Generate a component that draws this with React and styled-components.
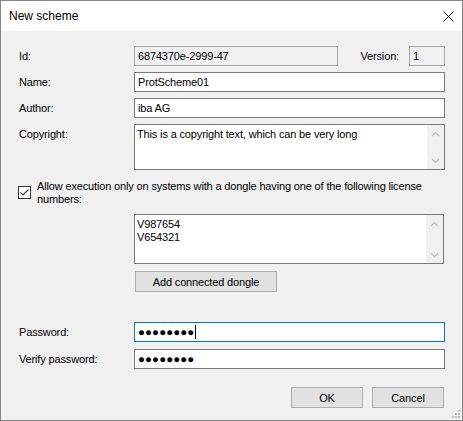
import React from "react";
import styled, { createGlobalStyle } from "styled-components";

const GlobalStyle = createGlobalStyle`
  html, body { margin: 0; padding: 0; background: #ffffff; }
  #root { width: 463px; height: 421px; }
  *, *::before, *::after { box-sizing: border-box; }
`;

const Window = styled.div`
  position: relative;
  width: 463px;
  height: 421px;
  border: 1px solid #868686;
  background: #f0f0f0;
  display: flex;
  flex-direction: column;
  font-family: "Liberation Sans", Arial, sans-serif;
  font-size: 11px;
  letter-spacing: -0.15px;
  color: #000;
`;

const TitleBar = styled.div`
  height: 30px;
  flex-shrink: 0;
  background: #ffffff;
  display: flex;
  align-items: center;
  padding-left: 8px;
  font-size: 12px;
  letter-spacing: 0;
`;

const Title = styled.span`
  flex: 1;
`;

const CloseButton = styled.div`
  width: 28px;
  height: 30px;
  display: flex;
  align-items: center;
  justify-content: center;
`;

const Body = styled.div`
  flex: 1;
  display: flex;
  flex-direction: column;
  padding: 15px 17px 0 18px;
`;

const Row = styled.div`
  display: flex;
  align-items: ${(p) => (p.$top ? "flex-start" : "center")};
  margin-top: ${(p) => p.$mt ?? 6}px;
`;

const Label = styled.div`
  width: ${(p) => p.$w ?? 115}px;
  flex-shrink: 0;
  padding-top: ${(p) => p.$pt ?? 0}px;
`;

const Field = styled.div`
  position: relative;
  width: ${(p) => (p.$w ? `${p.$w}px` : "auto")};
  flex: ${(p) => (p.$w ? "0 0 auto" : "1")};
  height: ${(p) => p.$h ?? 20}px;
  border: 1px solid
    ${(p) => (p.$focused ? "#0078d7" : p.$readOnly ? "#a9a9a9" : "#7a7a7a")};
  background: ${(p) => (p.$readOnly ? "#f0f0f0" : "#ffffff")};
  display: flex;
  align-items: ${(p) => (p.$multi ? "flex-start" : "center")};
  padding: ${(p) => (p.$multi ? "3px 20px 0 2px" : "0 3px")};
  white-space: nowrap;
  overflow: hidden;
  line-height: 13px;
`;

const Lines = styled.div`
  display: flex;
  flex-direction: column;
`;

const ScrollBar = styled.div`
  position: absolute;
  top: 0;
  right: 0;
  bottom: 0;
  width: 17px;
  background: #f0f0f0;
  display: flex;
  flex-direction: column;
  justify-content: space-between;
  align-items: center;
  padding: 6px 0 5px;
`;

const Spacer = styled.div`
  flex: 1;
`;

const VersionLabel = styled.div`
  margin-right: 10px;
`;

const CheckRow = styled.div`
  display: flex;
  align-items: center;
  margin-top: 10px;
  margin-left: -1px;
`;

const CheckBox = styled.div`
  width: 13px;
  height: 13px;
  flex-shrink: 0;
  border: 1px solid #333333;
  background: #ffffff;
  display: flex;
  align-items: center;
  justify-content: center;
  margin-right: 6px;
  margin-top: -1px;
`;

const CheckText = styled.div`
  line-height: 13px;
`;

const Indented = styled.div`
  margin-left: 115px;
  margin-top: 8px;
  display: flex;
  flex-direction: column;
  align-items: flex-start;
  gap: 7px;
`;

const Button = styled.button`
  width: ${(p) => p.$w}px;
  height: 21px;
  border: 1px solid #adadad;
  background: #e1e1e1;
  font-family: inherit;
  font-size: 11px;
  letter-spacing: inherit;
  color: #000;
  padding: 0;
  margin: 0;
  display: flex;
  align-items: center;
  justify-content: center;
`;

const DongleButton = styled(Button)`
  margin-left: 1px;
`;

const Footer = styled.div`
  display: flex;
  justify-content: flex-end;
  gap: 9px;
  margin-top: 18px;
  margin-right: 1px;
`;

const Dots = styled.span`
  font-size: 11.5px;
  letter-spacing: 0.1px;
`;

const Caret = styled.span`
  display: inline-block;
  width: 1px;
  height: 14px;
  background: #000;
  margin-left: 1px;
`;

const Grip = styled.svg`
  position: absolute;
  right: 1px;
  bottom: 1px;
`;

const Chevron = ({ up }) => (
  <svg width="9" height="6" viewBox="0 0 9 6">
    <path
      d={up ? "M1 5 L4.5 1.5 L8 5" : "M1 1 L4.5 4.5 L8 1"}
      fill="none"
      stroke="#c2c2c2"
      strokeWidth="1.4"
    />
  </svg>
);

const VScroll = () => (
  <ScrollBar>
    <Chevron up />
    <Chevron />
  </ScrollBar>
);

export default function App() {
  return (
    <>
      <GlobalStyle />
      <Window>
        <TitleBar>
          <Title>New scheme</Title>
          <CloseButton>
            <svg width="11" height="11" viewBox="0 0 11 11">
              <path d="M0.5 0.5 L10.5 10.5 M10.5 0.5 L0.5 10.5" stroke="#000" strokeWidth="1" />
            </svg>
          </CloseButton>
        </TitleBar>
        <Body>
          <Row $mt={0}>
            <Label>Id:</Label>
            <Field $w={204} $readOnly>6874370e-2999-47</Field>
            <Spacer />
            <VersionLabel>Version:</VersionLabel>
            <Field $w={36} $readOnly>1</Field>
          </Row>
          <Row>
            <Label>Name:</Label>
            <Field>ProtScheme01</Field>
          </Row>
          <Row>
            <Label>Author:</Label>
            <Field>iba AG</Field>
          </Row>
          <Row $top>
            <Label $pt={4}>Copyright:</Label>
            <Field $h={46} $multi>
              This is a copyright text, which can be very long
              <VScroll />
            </Field>
          </Row>
          <CheckRow>
            <CheckBox>
              <svg width="11" height="11" viewBox="0 0 11 11">
                <path d="M1.5 5.5 L4 8 L9.5 2.5" fill="none" stroke="#333" strokeWidth="1.1" />
              </svg>
            </CheckBox>
            <CheckText>
              Allow execution only on systems with a dongle having one of the following license numbers:
            </CheckText>
          </CheckRow>
          <Indented>
            <Field $w={310} $h={50} $multi>
              <Lines>
                <span>V987654</span>
                <span>V654321</span>
              </Lines>
              <VScroll />
            </Field>
            <DongleButton $w={142}>Add connected dongle</DongleButton>
          </Indented>
          <Row $mt={30}>
            <Label>Password:</Label>
            <Field $focused>
              <Dots>●●●●●●●●</Dots>
              <Caret />
            </Field>
          </Row>
          <Row $mt={7}>
            <Label>Verify password:</Label>
            <Field>
              <Dots>●●●●●●●●</Dots>
            </Field>
          </Row>
          <Footer>
            <Button $w={72}>OK</Button>
            <Button $w={72}>Cancel</Button>
          </Footer>
        </Body>
        <Grip width="10" height="10" viewBox="0 0 10 10">
          {[
            [7, 1],
            [4, 4],
            [7, 4],
            [1, 7],
            [4, 7],
            [7, 7],
          ].map(([x, y]) => (
            <rect key={`${x}-${y}`} x={x} y={y} width="2" height="2" fill="#b8b8b8" />
          ))}
        </Grip>
      </Window>
    </>
  );
}
